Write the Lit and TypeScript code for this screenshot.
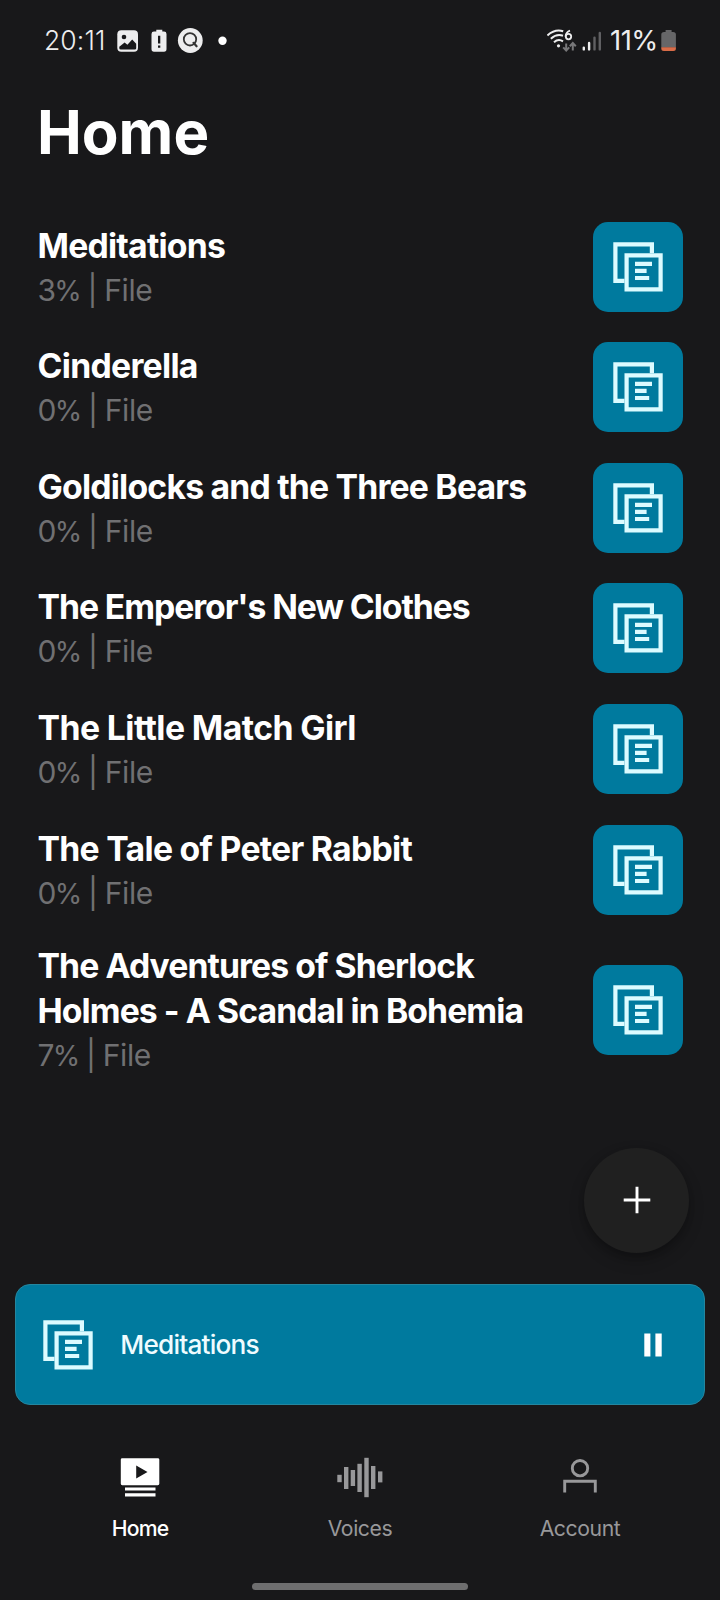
import { LitElement, html, css, svg } from "lit";
import { customElement } from "lit/decorators.js";
import { styleMap } from "lit/directives/style-map.js";

interface Book {
  title: string;
  progress: number;
  tracking: number;
}

const books: Book[] = [
  { title: "Meditations", progress: 3, tracking: -0.78 },
  { title: "Cinderella", progress: 0, tracking: -0.72 },
  { title: "Goldilocks and the Three Bears", progress: 0, tracking: -0.8 },
  { title: "The Emperor's New Clothes", progress: 0, tracking: -1.08 },
  { title: "The Little Match Girl", progress: 0, tracking: -0.58 },
  { title: "The Tale of Peter Rabbit", progress: 0, tracking: -0.72 },
  { title: "The Adventures of Sherlock Holmes - A Scandal in Bohemia", progress: 7, tracking: -0.93 },
];

// Two stacked pages, the front one with text lines.
const pagesIcon = html`<svg class="pages" width="50" height="50" viewBox="0 0 50 50" fill="#dcfbff">
  <path d="M0.3 0.2H41V11.2H36.8V4.4H4.5V36.8H11.5V41H0.3Z" />
  <path fill-rule="evenodd" d="M11.5 11.2H49.7V49.4H11.5ZM15.7 15.4V45.2H45.5V15.4Z" />
  <path d="M22 19.8H39V24H22ZM22 26.8H33.6V31H22ZM22 33.9H36.2V38.1H22Z" />
</svg>`;

const bars = [
  [0.3, 17.8, 7.4],
  [7, 10, 22],
  [13.7, 13, 16],
  [20.4, 6.8, 28.2],
  [27.3, 0.8, 39.4],
  [34, 9, 23],
  [41, 14.4, 11],
];

@customElement("app-root")
export class AppRoot extends LitElement {
  static styles = css`
    :host {
      display: flex;
      flex-direction: column;
      box-sizing: border-box;
      width: 720px;
      height: 1600px;
      overflow: hidden;
      background: #18181a;
      color: #fff;
      font-family: Inter, "Liberation Sans", sans-serif;
      font-variant-ligatures: none;
      font-feature-settings: "calt" 0, "liga" 0;
    }
    svg {
      display: block;
      flex: none;
    }
    .status {
      display: flex;
      align-items: center;
      height: 81px;
      padding: 0 43px 0 44px;
      color: #ededee;
      flex: none;
      box-sizing: border-box;
    }
    .clock {
      width: 72px;
      margin-top: -2px;
      font-size: 26.5px;
      font-weight: 300;
      letter-spacing: 0.1px;
      white-space: nowrap;
    }
    .battery-level {
      font-size: 27.5px;
      font-weight: 400;
      letter-spacing: -0.5px;
      margin-left: 7px;
      margin-top: -1px;
      width: 51px;
      white-space: nowrap;
    }
    .spacer {
      flex: 1;
    }
    h1 {
      margin: 0;
      padding: 14px 0 0 37px;
      height: 111.3px;
      box-sizing: content-box;
      flex: none;
      font-size: 60px;
      line-height: 75px;
      font-weight: 700;
    }
    .list {
      display: flex;
      flex: none;
      flex-direction: column;
    }
    .row {
      display: flex;
      align-items: center;
      justify-content: space-between;
      box-sizing: border-box;
      min-height: 120.6px;
      padding: 12.4px 37.5px;
    }
    .text {
      width: 510px;
      padding-top: 1px;
      margin-bottom: -1px;
      line-height: 45px;
    }
    .title {
      font-size: 33.75px;
      font-weight: 700;
    }
    .meta {
      height: 45px;
      font-size: 30px;
      letter-spacing: -0.4px;
      color: #707072;
    }
    .number {
      letter-spacing: -1.8px;
    }
    .percent {
      font-size: 28px;
      letter-spacing: -1.9px;
    }
    .divider {
      letter-spacing: -0.8px;
    }
    .tile {
      display: flex;
      align-items: center;
      justify-content: center;
      width: 90px;
      height: 90px;
      border-radius: 15px;
      background: #007a9e;
    }
    .dock {
      margin-top: auto;
      display: flex;
      flex: none;
      flex-direction: column;
    }
    .fab {
      display: flex;
      align-items: center;
      justify-content: center;
      align-self: flex-end;
      width: 105px;
      height: 105px;
      margin: 0 30.7px 31.3px 0;
      border-radius: 50%;
      background: #202020;
      box-shadow: 0 7px 15px rgba(0, 0, 0, 0.22), 0 3px 6px rgba(0, 0, 0, 0.15);
    }
    .player {
      display: flex;
      align-items: center;
      box-sizing: border-box;
      height: 120.6px;
      margin: 0 15.4px 0 15.3px;
      padding: 0 41px 0 27px;
      border: 1.9px solid #24869f;
      border-radius: 15px;
      background: #007a9e;
    }
    .track {
      flex: 1;
      margin-left: 27px;
      font-size: 26.25px;
      font-weight: 450;
      letter-spacing: -0.82px;
      color: #effcff;
    }
    .tabs {
      display: flex;
      height: 178px;
      padding: 0 30px;
    }
    .tab {
      flex: 1;
      display: flex;
      flex-direction: column;
      align-items: center;
      padding-top: 52px;
      font-size: 21.2px;
      line-height: 26px;
      letter-spacing: -0.4px;
      color: #98989a;
      font-weight: 400;
    }
    .tab svg {
      margin-bottom: 16px;
    }
    .tab.active {
      color: #fff;
      font-weight: 500;
      letter-spacing: -0.8px;
    }
    .handle {
      width: 216px;
      height: 7.5px;
      margin: 0 auto 9.7px;
      border-radius: 4px;
      background: #6e6e6f;
    }
  `;

  private renderStatus() {
    return html`<div class="status">
      <span class="clock">20:11</span>
      <svg width="140" height="30" viewBox="0 0 140 30">
        <rect x="1.3" y="4.3" width="20.7" height="21.4" rx="4" fill="#ededee" />
        <circle cx="8" cy="11" r="2.3" fill="#18181a" />
        <path d="M3.3 20.8L8.6 16.4L11.4 18.8L16.2 13.5L20.2 17.8V22.3Q20.2 23.6 18.8 23.6H4.8Q3.3 23.6 3.3 22.2Z" fill="#18181a" />
        <path d="M40.3 3.8H46.3V5.6H48Q50.5 5.6 50.5 8V23Q50.5 25.7 48 25.7H38Q35.5 25.7 35.5 23V8Q35.5 5.6 38 5.6H40.3Z" fill="#ededee" />
        <path d="M42 9.7H44.3V17.5H42ZM42 19.6H44.3V21.8H42Z" fill="#18181a" />
        <circle cx="74.3" cy="14.5" r="12.4" fill="#ededee" />
        <circle cx="74" cy="13.3" r="6.2" fill="none" stroke="#333" stroke-width="1.8" />
        <path d="M77.5 16.8L80.6 20.3" stroke="#333" stroke-width="2.2" stroke-linecap="round" />
        <circle cx="106.5" cy="14.7" r="4.2" fill="#fff" />
      </svg>
      <span class="spacer"></span>
      <svg width="56" height="30" viewBox="0 0 56 30">
        <g fill="none" stroke="#ededee" stroke-width="2">
          <path d="M0.4 9.4Q8 2.6 16.2 5.2" />
          <path d="M3.8 12.8Q9.8 7.4 16 9.8" />
          <path d="M7 16.2Q11.4 12.4 16 15.4" />
          <path d="M23 4.6Q19 5.8 18.5 10.6" stroke-width="1.8" />
          <circle cx="21.5" cy="10.6" r="2.7" stroke-width="1.8" />
        </g>
        <circle cx="11.5" cy="19.8" r="1.6" fill="#ededee" />
        <path d="M19.2 17.5V24.5M16.2 21.3L19.2 24.6L22.2 21.3M25.8 24.5V17.2M22.8 20.2L25.8 17L28.8 20.2" fill="none" stroke="#777779" stroke-width="2" />
        <g stroke-width="2.4" stroke-linecap="round">
          <path d="M36.8 21.6V23.4M42.1 17V23.4" stroke="#ededee" />
          <path d="M47.5 11.6V23.4M52.8 7V23.4" stroke="#606063" />
        </g>
      </svg>
      <span class="battery-level">11%</span>
      <svg width="16" height="30" viewBox="0 0 16 30">
        <path d="M4.6 4H10.6V6H12.1Q14.9 6 14.9 8.6V21.6H0.3V8.6Q0.3 6 3.1 6H4.6Z" fill="#666668" />
        <path d="M0.3 21.2H14.9V22.4Q14.9 24.9 12.4 24.9H2.8Q0.3 24.9 0.3 22.4Z" fill="#d96c48" />
      </svg>
    </div>`;
  }

  private renderTabs() {
    return html`<nav class="tabs">
      <div class="tab active">
        <svg width="40" height="42" viewBox="0 0 40 42" fill="#fff">
          <path fill-rule="evenodd" d="M2.2 1.2H37.8Q39.3 1.2 39.3 2.6V26.8Q39.3 28.2 37.8 28.2H2.2Q0.8 28.2 0.8 26.8V2.6Q0.8 1.2 2.2 1.2ZM16.2 8.4V21.4L27.5 14.9Z" />
          <path d="M5 30.4H35.5V33.6H5ZM5 36.3H35.5V39.5H5Z" />
        </svg>
        <span>Home</span>
      </div>
      <div class="tab">
        <svg width="46" height="42" viewBox="0 0 46 42" fill="#98989a">
          ${bars.map(([x, y, h]) => svg`<rect x=${x} y=${y} width="4.4" height=${h} />`)}
        </svg>
        <span>Voices</span>
      </div>
      <div class="tab">
        <svg width="40" height="42" viewBox="0 0 40 42" fill="none" stroke="#98989a" stroke-width="2.9">
          <circle cx="20" cy="11.2" r="7.7" />
          <path d="M4.7 35.6V24.2H35.3V35.6" />
        </svg>
        <span>Account</span>
      </div>
    </nav>`;
  }

  render() {
    return html`
      ${this.renderStatus()}
      <h1>Home</h1>
      <div class="list">
        ${books.map(
          (b) => html`<div class="row">
            <div class="text">
              <div class="title" style=${styleMap({ letterSpacing: `${b.tracking}px` })}>${b.title}</div>
              <div class="meta"><span class="number">${b.progress}</span><span class="percent">%</span><span class="divider"> | </span>File</div>
            </div>
            <div class="tile">${pagesIcon}</div>
          </div>`
        )}
      </div>
      <div class="dock">
        <div class="fab">
          <svg width="28" height="28" viewBox="0 0 28 28">
            <path d="M14 0.7V27.3M0.7 14H27.3" stroke="#fff" stroke-width="2.9" />
          </svg>
        </div>
        <div class="player">
          ${pagesIcon}
          <span class="track">Meditations</span>
          <svg width="20" height="24" viewBox="0 0 20 24" fill="#fff">
            <path d="M1.3 0.5H7.4V23.5H1.3ZM12.4 0.5H18.7V23.5H12.4Z" />
          </svg>
        </div>
        ${this.renderTabs()}
        <div class="handle"></div>
      </div>
    `;
  }
}
